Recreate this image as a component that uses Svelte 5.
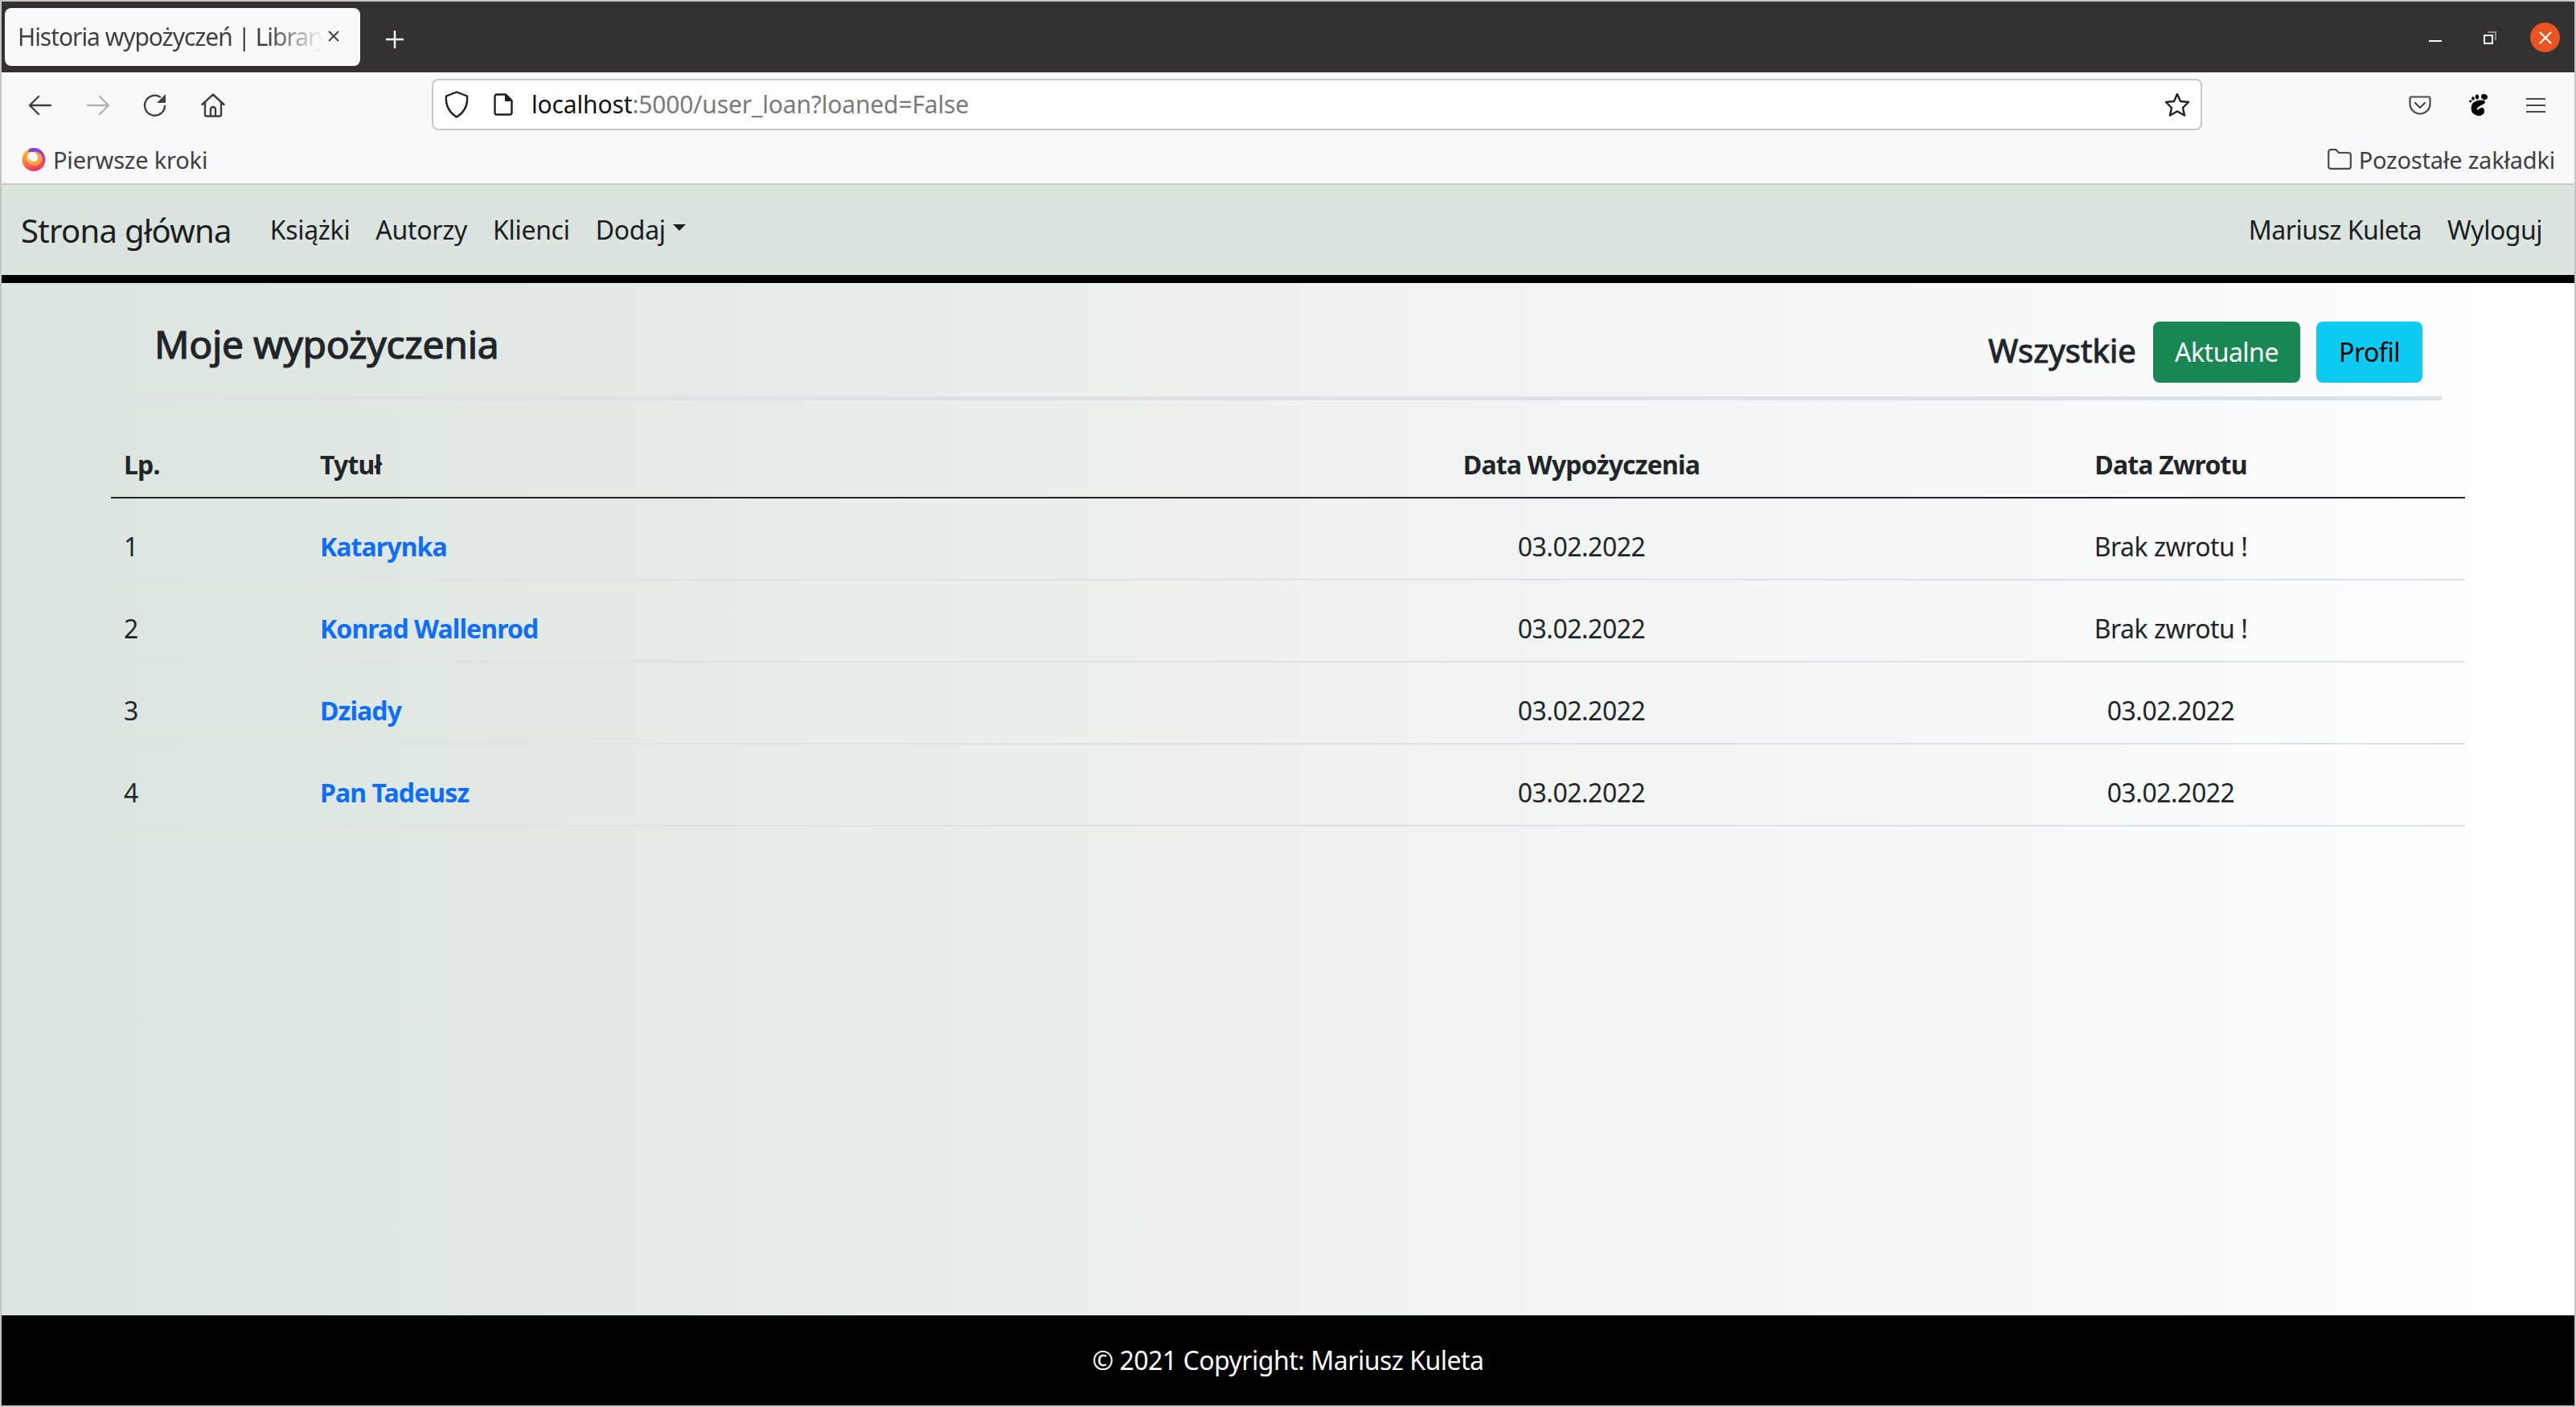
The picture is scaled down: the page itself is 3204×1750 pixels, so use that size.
<script>
  const rows = [
    { n: 1, title: 'Katarynka', loan: '03.02.2022', back: 'Brak zwrotu !' },
    { n: 2, title: 'Konrad Wallenrod', loan: '03.02.2022', back: 'Brak zwrotu !' },
    { n: 3, title: 'Dziady', loan: '03.02.2022', back: '03.02.2022' },
    { n: 4, title: 'Pan Tadeusz', loan: '03.02.2022', back: '03.02.2022' }
  ];
</script>

<div class="window">
  <div class="tabbar">
    <div class="tab">
      <span class="tab-title">Historia wypożyczeń | Library</span>
      <svg class="tab-x" width="16" height="16" viewBox="0 0 16 16"><path d="M2 2L14 14M14 2L2 14" stroke="#3a3a3c" stroke-width="1.8" fill="none"/></svg>
    </div>
    <svg class="plus" width="24" height="24" viewBox="0 0 24 24"><path d="M12 1V23M1 12H23" stroke="#fff" stroke-width="2.4" fill="none"/></svg>
    <div class="wm">
      <svg width="16" height="4" viewBox="0 0 16 4" class="wm-min"><rect y="0" width="16" height="2" fill="#fff"/></svg>
      <svg width="16" height="18" viewBox="0 0 16 18" class="wm-res"><path d="M5 2H15V12" stroke="#8f8f8f" stroke-width="2" fill="none"/><rect x="1" y="6" width="10" height="10" stroke="#fff" stroke-width="2" fill="none"/></svg>
      <span class="wm-close"><svg width="16" height="16" viewBox="0 0 16 16"><path d="M1 1L15 15M15 1L1 15" stroke="#fff" stroke-width="2.2" fill="none"/></svg></span>
    </div>
  </div>

  <div class="toolbar">
    <div class="navbtns">
      <svg width="30" height="26" viewBox="0 0 30 26"><path d="M28 13H2M13 2L2 13L13 24" stroke="#3f3f41" stroke-width="2.4" fill="none" stroke-linecap="round" stroke-linejoin="round"/></svg>
      <svg width="30" height="26" viewBox="0 0 30 26"><path d="M2 13H28M17 2L28 13L17 24" stroke="#b2b2b3" stroke-width="2.4" fill="none" stroke-linecap="round" stroke-linejoin="round"/></svg>
      <svg width="30" height="30" viewBox="0 0 30 30"><path d="M27 16A12.5 12.5 0 1 1 21 4.5" stroke="#3f3f41" stroke-width="2.4" fill="none" stroke-linecap="round"/><path d="M28 1V12H17Z" fill="#3f3f41"/></svg>
      <svg width="30" height="30" viewBox="0 0 30 30"><path d="M1.5 14L15 1.5L28.5 14M5 11V26.5A2 2 0 0 0 7 28.5H23A2 2 0 0 0 25 26.5V11M12 28V20A3 3 0 0 1 18 20V28" stroke="#3f3f41" stroke-width="2.4" fill="none" stroke-linecap="round" stroke-linejoin="round"/></svg>
    </div>
    <div class="urlbar">
      <svg class="shield" width="30" height="34" viewBox="0 0 30 34"><path d="M15 1.5L28 6.5C29 18 24 27 15 32.5C6 27 1 18 2 6.5Z" stroke="#1f1f21" stroke-width="2.4" fill="none" stroke-linejoin="round"/></svg>
      <svg class="page" width="24" height="28" viewBox="0 0 24 28"><path d="M15 1.5H4A2.5 2.5 0 0 0 1.5 4V24A2.5 2.5 0 0 0 4 26.5H20A2.5 2.5 0 0 0 22.5 24V9Z" stroke="#1f1f21" stroke-width="2.4" fill="none" stroke-linejoin="round"/><path d="M14 1.5H16L22.5 8V10H14Z" fill="#1f1f21"/></svg>
      <span class="url"><span class="host">localhost</span>:5000/user_loan?loaned=False</span>
      <svg class="star" width="32" height="30" viewBox="0 0 32 30"><path d="M16 2L20 11L30 12L23 19L25 28.5L16 23.5L7 28.5L9 19L2 12L12 11Z" stroke="#1f1f21" stroke-width="2.4" fill="none" stroke-linejoin="round"/></svg>
    </div>
    <div class="tools">
      <svg width="28" height="24" viewBox="0 0 28 24"><path d="M3 1.5H25A1.5 1.5 0 0 1 26.5 3V10A12.5 12.5 0 0 1 1.5 10V3A1.5 1.5 0 0 1 3 1.5Z" stroke="#4a4a4c" stroke-width="2.2" fill="none"/><path d="M8 9L14 15L20 9" stroke="#4a4a4c" stroke-width="2.2" fill="none" stroke-linecap="round" stroke-linejoin="round"/></svg>
      <svg width="24" height="28" viewBox="0 0 24 28"><ellipse cx="1.8" cy="9" rx="1.6" ry="1.4" fill="#000"/><ellipse cx="5" cy="5.5" rx="1.8" ry="2.3" fill="#000"/><ellipse cx="10" cy="3.5" rx="2.2" ry="3" fill="#000"/><ellipse cx="19" cy="3.5" rx="4" ry="3.5" transform="rotate(25 19 3.5)" fill="#000"/><path d="M8 9C13 7 20 7 20 10C20 13 12 14 10 18C9 20 11 20 13 18C15 16 20 17 19 22C18 27 12 28 8 26C3 24 2 19 3 15C3.600 12 5 10 8 9Z" fill="#000"/></svg>
      <svg width="24" height="20" viewBox="0 0 24 20"><path d="M0 2H24M0 10H24M0 18H24" stroke="#4a4a4c" stroke-width="2.2" fill="none"/></svg>
    </div>
  </div>

  <div class="bookmarks">
    <span class="bm first">
      <svg width="30" height="30" viewBox="0 0 30 30">
        <defs>
          <linearGradient id="fx" x1="0.25" y1="0.05" x2="0.6" y2="1"><stop offset="0" stop-color="#ffc02e"/><stop offset="0.5" stop-color="#ff7a35"/><stop offset="1" stop-color="#ee2f72"/></linearGradient>
        </defs>
        <circle cx="15" cy="15.500" r="14.500" fill="url(#fx)"/>
        <circle cx="16" cy="13" r="9.500" fill="#f9f9fb"/>
        <path d="M9 2.500C16 -1 27 2 28.500 13C29 16 28.500 18 27.500 20C27 12 22 6 14 6C12 6 10 6 8 7Z" fill="#8a3fe0"/>
        <path d="M15 5.500C21 5 25.500 9 25.500 14C25.500 20 20 23.500 15 22.500C10.500 21.500 7.500 17.500 8.500 12.500C9.500 16 12 18.500 15.500 18C19 17.500 21 14.500 20 11.500C19 8.500 17 7 15 5.500Z" fill="#ffa02e"/>
      </svg>
      Pierwsze kroki
    </span>
    <span class="bm other">
      <svg width="30" height="26" viewBox="0 0 30 26"><path d="M1.200 4A2.800 2.800 0 0 1 4 1.200H10.500L14 5H26A2.800 2.800 0 0 1 28.800 7.800V22A2.800 2.800 0 0 1 26 24.800H4A2.800 2.800 0 0 1 1.200 22Z" stroke="#4a4a4c" stroke-width="2.2" fill="none" stroke-linejoin="round"/></svg>
      Pozostałe zakładki
    </span>
  </div>

  <nav class="navbar">
    <a class="brand" href="#x">Strona główna</a>
    <div class="links left">
      <a href="#x">Książki</a>
      <a href="#x">Autorzy</a>
      <a href="#x">Klienci</a>
      <a href="#x" class="dd">Dodaj</a>
    </div>
    <div class="links right">
      <a href="#x">Mariusz Kuleta</a>
      <a href="#x">Wyloguj</a>
    </div>
  </nav>

  <main>
    <div class="head">
      <h4>Moje wypożyczenia</h4>
      <div class="actions">
        <span class="all">Wszystkie</span>
        <a class="btn green" href="#x">Aktualne</a>
        <a class="btn cyan" href="#x">Profil</a>
      </div>
    </div>
    <table>
      <thead>
        <tr>
          <th class="c1">Lp.</th>
          <th class="c2">Tytuł</th>
          <th class="c3">Data Wypożyczenia</th>
          <th class="c4">Data Zwrotu</th>
        </tr>
      </thead>
      <tbody>
        {#each rows as r}
          <tr>
            <td class="c1">{r.n}</td>
            <td class="c2"><a href="#x">{r.title}</a></td>
            <td class="c3">{r.loan}</td>
            <td class="c4">{r.back}</td>
          </tr>
        {/each}
      </tbody>
    </table>
  </main>

  <footer>© 2021 Copyright: Mariusz Kuleta</footer>
</div>

<style>
  :global(body) { margin: 0; }
  .window {
    width: 3204px; height: 1750px; box-sizing: border-box;
    border: 2px solid #c4c4c4; display: flex; flex-direction: column;
    font-family: "Noto Sans", "Open Sans", sans-serif; font-size: 32px; color: #212529;
    letter-spacing: -0.5px;
    overflow: hidden;
  }
  a { text-decoration: none; color: inherit; }
  .tabbar { height: 88px; background: #333132; display: flex; align-items: flex-start; flex: none; position: relative; }
  .tab {
    width: 442px; height: 72px; margin: 8px 0 0 4px; background: #f9f9fb; border-radius: 8px;
    display: flex; align-items: center; padding-left: 16px; box-sizing: border-box; position: relative;
  }
  .tab-title {
    font-size: 30px; color: #3f3f41; white-space: nowrap; width: 380px; flex: none; letter-spacing: -1.05px; padding-bottom: 2px;
    -webkit-mask-image: linear-gradient(to right, #000 82%, #0000 100%);
    mask-image: linear-gradient(to right, #000 82%, #0000 100%);
  }
  .tab-x { margin-left: 5px; flex: none; margin-bottom: 2px; }
  .plus { margin: 35px 0 0 31px; }
  .wm { margin-left: auto; display: flex; align-items: flex-start; }
  .wm-min { margin-top: 48px; }
  .wm-res { margin: 36px 0 0 52px; }
  .wm-close {
    margin: 26px 18px 0 42px; width: 37px; height: 37px; border-radius: 50%; background: #e95420;
    display: flex; align-items: center; justify-content: center;
  }
  .toolbar { height: 82px; flex: none; background: #f9f9fb; display: flex; align-items: center; }
  .navbtns { display: flex; align-items: center; width: 535px; padding-left: 33px; gap: 42px; box-sizing: border-box; flex: none; }
  .navbtns svg:nth-child(3) { margin-left: -1px; }
  .urlbar {
    width: 2202px; height: 64px; box-sizing: border-box; border: 2px solid #c8c8c9; border-radius: 8px; background: #fff;
    display: flex; align-items: center; flex: none; margin-bottom: 2px;
  }
  .shield { margin-left: 14px; }
  .page { margin-left: 31px; }
  .url { margin-left: 23px; font-size: 30px; color: #7a7a7c; white-space: nowrap; letter-spacing: -0.15px; padding-bottom: 2px; }
  .host { color: #111; }
  .star { margin-left: auto; margin-right: 13px; }
  .tools { display: flex; align-items: center; gap: 47px; margin-left: 257px; }
  .bookmarks {
    height: 52px; flex: none; background: #f9f9fb; border-bottom: 2px solid #c8c8c9; display: flex; justify-content: space-between; align-items: center;
    font-size: 29px; color: #3f3f41; padding: 0 24px 4px 25px; box-sizing: content-box; letter-spacing: -0.2px;
  }
  .bm { display: inline-flex; align-items: center; gap: 9px; white-space: nowrap; }
  .navbar {
    height: 112px; flex: none; background: #dbe4df; border-bottom: 10px solid #000; display: flex; align-items: center;
    padding: 0 40px 0 24px; color: #1b1e21;
  }
  .brand { font-size: 40px; margin-right: 48px; letter-spacing: -0.7px; }
  .links { display: flex; gap: 32px; padding-bottom: 2px; }
  .links.left { letter-spacing: -0.3px; }
  .links.right { margin-left: auto; }
  .dd { display: inline-flex; align-items: center; gap: 9px; }
  .dd::after {
    content: ""; border-top: 8px solid currentColor; border-left: 8px solid transparent; border-right: 8px solid transparent; margin-top: -4px;
  }
  main {
    flex: 1; padding: 48px 136px 0; background: linear-gradient(to right, #dbe4df, #ffffff);
  }
  .head {
    margin-left: 30px; margin-right: 29px; padding: 0 24px 17px 24px; border-bottom: 5px solid #dee2e6;
    display: flex; align-items: center; justify-content: space-between; height: 76px; box-sizing: content-box;
  }
  h4 {
    margin: 0 0 20px; font-size: 48px; font-weight: 400; line-height: 1.2; color: #212529; letter-spacing: -0.3px;
    -webkit-text-stroke: 1.2px #212529;
  }
  .actions { display: flex; align-items: center; }
  .all {
    font-size: 40px; font-weight: 400; margin-right: 21px; letter-spacing: 0.1px; padding-bottom: 5px;
    -webkit-text-stroke: 1px #212529;
  }
  .btn { height: 76px; display: flex; align-items: center; justify-content: center; border-radius: 8px; padding-bottom: 2px; box-sizing: border-box; }
  .green { width: 183px; background: #198754; color: #fff; margin-right: 20px; }
  .cyan { width: 132px; background: #0dcaf0; color: #000; }
  table { width: 2928px; margin-top: 20px; border-collapse: collapse; table-layout: fixed; }
  th, td { padding: 36px 16px 16px; line-height: 48px; text-align: left; }
  th { font-weight: 700; border-bottom: 2px solid #212529; letter-spacing: -0.8px; }
  td { border-bottom: 2px solid #dee2e6; }
  .c1 { width: 244px; box-sizing: border-box; }
  .c2 { width: 1218px; box-sizing: border-box; }
  .c3 { width: 734px; box-sizing: border-box; text-align: center; }
  .c4 { box-sizing: border-box; text-align: center; }
  td a { color: #0d6efd; font-weight: 700; letter-spacing: -0.9px; }
  footer {
    height: 112px; flex: none; background: #000; color: #fff; display: flex; align-items: center; justify-content: center; padding-bottom: 2px; box-sizing: border-box;
  }
</style>
